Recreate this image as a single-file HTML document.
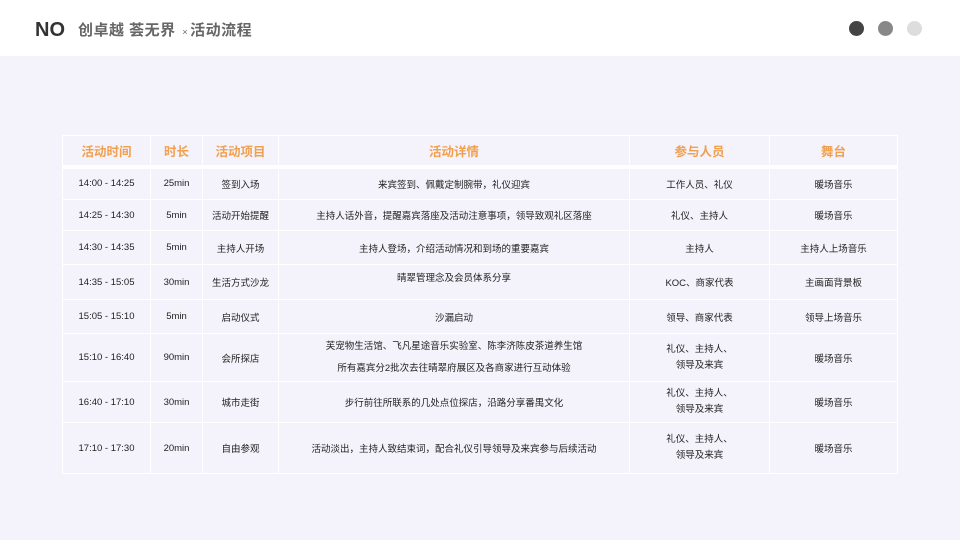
<!DOCTYPE html>
<html><head><meta charset="utf-8"><style>
*{margin:0;padding:0;box-sizing:border-box}
body{width:960px;height:540px;background:#f4f3fb;font-family:"Liberation Sans","Noto Sans CJK SC",sans-serif;position:relative;overflow:hidden}
.hd{position:absolute;left:0;top:0;width:960px;height:56px;background:#fff}
.no{position:absolute;left:35px;top:19px;font-size:20px;font-weight:bold;color:#333}
.tt{position:absolute;left:78px;top:19px;font-size:15px;color:#666;font-weight:bold;letter-spacing:0.5px}
.tt small{font-size:9px;font-weight:normal;margin:0 2px}
.dot{position:absolute;top:21px;width:15px;height:15px;border-radius:50%}
table{position:absolute;left:62px;top:135px;width:836px;border-collapse:collapse;font-size:9.5px;color:#222}
td,th{border:1.5px solid #fff;text-align:center;padding:0;vertical-align:middle}
th{color:#f0a050;font-size:12.5px;font-weight:bold;height:31px;border-bottom:4px solid #fff}
td p{line-height:22px}
</style></head><body>
<div class="hd"></div>
<div class="no">NO</div>
<div class="tt">创卓越 荟无界 <small>×</small>活动流程</div>
<div class="dot" style="left:849px;background:#444"></div>
<div class="dot" style="left:878px;background:#888"></div>
<div class="dot" style="left:907px;background:#ddd"></div>
<table>
<tr><th style="width:88px">活动时间</th><th style="width:52px">时长</th><th style="width:76px">活动项目</th><th style="width:351px">活动详情</th><th style="width:140px">参与人员</th><th>舞台</th></tr>
<tr style="height:33px"><td>14:00 - 14:25</td><td>25min</td><td>签到入场</td><td>来宾签到、佩戴定制腕带，礼仪迎宾</td><td>工作人员、礼仪</td><td>暖场音乐</td></tr>
<tr style="height:31px"><td>14:25 - 14:30</td><td>5min</td><td>活动开始提醒</td><td>主持人话外音，提醒嘉宾落座及活动注意事项，领导致观礼区落座</td><td>礼仪、主持人</td><td>暖场音乐</td></tr>
<tr style="height:34px"><td>14:30 - 14:35</td><td>5min</td><td>主持人开场</td><td>主持人登场，介绍活动情况和到场的重要嘉宾</td><td>主持人</td><td>主持人上场音乐</td></tr>
<tr style="height:35px"><td>14:35 - 15:05</td><td>30min</td><td>生活方式沙龙</td><td><p style="margin-top:-6px">晴翠管理念及会员体系分享</p></td><td>KOC、商家代表</td><td>主画面背景板</td></tr>
<tr style="height:34px"><td>15:05 - 15:10</td><td>5min</td><td>启动仪式</td><td>沙漏启动</td><td>领导、商家代表</td><td>领导上场音乐</td></tr>
<tr style="height:48px"><td>15:10 - 16:40</td><td>90min</td><td>会所探店</td><td><p>芙宠物生活馆、飞凡星途音乐实验室、陈李济陈皮茶道养生馆</p><p>所有嘉宾分2批次去往晴翠府展区及各商家进行互动体验</p></td><td><p style="line-height:16px">礼仪、主持人、<br>领导及来宾</p></td><td>暖场音乐</td></tr>
<tr style="height:41px"><td>16:40 - 17:10</td><td>30min</td><td>城市走街</td><td>步行前往所联系的几处点位探店，沿路分享番禺文化</td><td><p style="line-height:16px">礼仪、主持人、<br>领导及来宾</p></td><td>暖场音乐</td></tr>
<tr style="height:51px"><td>17:10 - 17:30</td><td>20min</td><td>自由参观</td><td>活动淡出，主持人致结束词，配合礼仪引导领导及来宾参与后续活动</td><td><p style="line-height:16px">礼仪、主持人、<br>领导及来宾</p></td><td>暖场音乐</td></tr>
</table>
</body></html>
